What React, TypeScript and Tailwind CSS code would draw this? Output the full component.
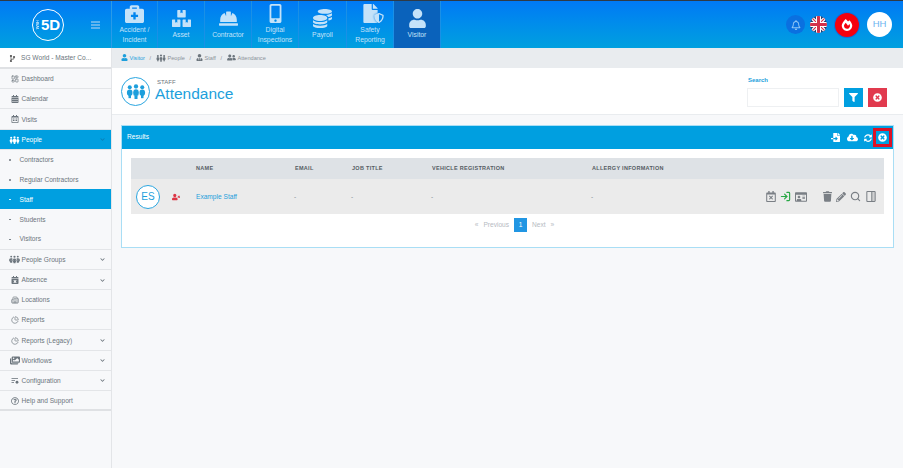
import {
  FaRegBell, FaBriefcaseMedical, FaBoxes, FaCalendarAlt, FaRegCalendarTimes, FaCalendarTimes, FaChevronDown, FaCloudDownloadAlt,
  FaCoins, FaFile, FaFileImport, FaFilter, FaFireAlt, FaHardHat, FaRegIdCard, FaImages, FaMobileAlt, FaPencilAlt,
  FaRegCalendarAlt, FaShieldAlt, FaSyncAlt, FaTimesCircle, FaTrash, FaUser, FaUserFriends, FaUserTimes,
  FaUserTie, FaRegQuestionCircle, FaCodeBranch,
} from 'react-icons/fa';
import { FaPeopleGroup } from 'react-icons/fa6';
import { Building2, LayoutDashboard, LogIn, PieChart, Search } from 'lucide-react';

// three standing people, used for the People section
function PeopleIcon({ className }: { className?: string }) {
  return (
    <svg viewBox="0 0 24 18" fill="currentColor" className={className}>
      <circle cx="4.5" cy="4" r="2.4" />
      <circle cx="12" cy="3" r="2.6" />
      <circle cx="19.5" cy="4" r="2.4" />
      <ellipse cx="4.5" cy="10.5" rx="3.4" ry="3.8" />
      <ellipse cx="19.5" cy="10.5" rx="3.4" ry="3.8" />
      <ellipse cx="12" cy="10.5" rx="3.8" ry="4.6" stroke="#fff" strokeWidth="0.6" />
      <rect x="3" y="13" width="3" height="4" />
      <rect x="18" y="13" width="3" height="4" />
      <rect x="10.2" y="14" width="3.6" height="4" />
    </svg>
  );
}

function ConfigIcon({ className }: { className?: string }) {
  return (
    <svg viewBox="0 0 16 14" className={className}>
      <path d="M1 2h13M1 6h7M1 10h5" stroke="currentColor" strokeWidth="1.6" fill="none" />
      <circle cx="12" cy="9.5" r="2.8" fill="currentColor" />
    </svg>
  );
}

function ColumnsIcon({ className }: { className?: string }) {
  return (
    <svg viewBox="0 0 12 14" className={className} fill="none" stroke="currentColor" strokeWidth="1.3">
      <rect x="0.7" y="0.7" width="10.6" height="12.6" rx="0.8" />
      <path d="M7 1v12" />
      <rect x="7" y="1" width="4" height="12" fill="currentColor" fillOpacity="0.25" stroke="none" />
    </svg>
  );
}

function SafetyIcon({ className }: { className?: string }) {
  return (
    <span className={`relative block ${className}`}>
      <FaFile className="text-[19px]" />
      <FaShieldAlt className="absolute -right-[4px] bottom-0 text-[10px] text-[#c4e2f9] [filter:drop-shadow(0_0_1px_#0a84e8)]" />
    </span>
  );
}

const modules = [
  { icon: FaBriefcaseMedical, label: ['Accident /', 'Incident'], w: 'w-[46px]' },
  { icon: FaBoxes, label: ['Asset'], w: 'w-[47px]' },
  { icon: FaHardHat, label: ['Contractor'], w: 'w-[47px]' },
  { icon: FaMobileAlt, label: ['Digital', 'Inspections'], w: 'w-[47px]' },
  { icon: FaCoins, label: ['Payroll'], w: 'w-[48px]' },
  { icon: SafetyIcon, label: ['Safety', 'Reporting'], w: 'w-[47px]' },
  { icon: FaUser, label: ['Visitor'], w: 'w-[47px]', active: true },
];

function SideRow({ icon: Icon, iconClass, label, caret, active, last }: { icon: any; iconClass?: string; label: string; caret?: boolean; active?: boolean; last?: boolean }) {
  return (
    <div className={`flex h-[20.2px] items-center border-b pl-[8px] pr-[6px] pt-px text-[6.6px] ${last ? 'border-[#dfe1e4] border-b-2' : 'border-[#e3e5e8]'} ${active ? 'bg-[#009fe0] text-white' : 'text-[#6c757d]'}`}>
      <span className="flex w-[13px] shrink-0 items-center justify-center">
        <Icon className={iconClass ?? 'h-[8px] w-[8px]'} />
      </span>
      <span className="ml-[0.5px] flex-1">{label}</span>
      {caret && <FaChevronDown className={`text-[5px] ${active ? 'text-[#0a7fb5]' : 'text-[#6c757d]'}`} />}
    </div>
  );
}

function SubRow({ label, active }: { label: string; active?: boolean }) {
  return (
    <div className={`flex h-[19.8px] items-center pl-[9px] pt-px text-[6.6px] ${active ? 'bg-[#009fe0] text-white' : 'text-[#6c757d]'}`}>
      <span className={`mr-[9px] h-[1.5px] w-[1.5px] rounded-full ${active ? 'bg-white' : 'bg-[#6c757d]'}`} />
      <span>{label}</span>
    </div>
  );
}

function Crumb({ icon: Icon, iconClass, label, active, sep }: { icon: any; iconClass: string; label: string; active?: boolean; sep?: boolean }) {
  return (
    <span className={`flex items-center gap-[1.5px] ${active ? 'text-[#1d9fdc]' : 'text-[#8a9299]'}`}>
      <Icon className={`${iconClass} ${active ? 'text-[#1d9fdc]' : 'text-[#6c757d]'}`} />
      <span>{label}</span>
      {sep && <span className="ml-[3px] mr-[5px] text-[#8a9299]">/</span>}
    </span>
  );
}

export default function App() {
  return (
    <div className="flex h-[468px] w-[903px] flex-col overflow-hidden bg-[#f7f8fa] font-['Liberation_Sans',Arial,sans-serif]">
      {/* Top bar */}
      <div className="h-px bg-[#2f3a45]" />
      <header className="flex h-[47px] items-stretch bg-gradient-to-b from-[#0079f5] to-[#00a0df]">
        <div className="flex w-[112px] items-center border-r border-[#2a9be8]">
          <div className="ml-[32px] flex h-[32px] w-[32px] items-center justify-center rounded-full border-[1.5px] border-white text-white">
            <span className="mr-px rotate-180 text-[4px] leading-none [writing-mode:vertical-lr]">WSH</span>
            <span className="text-[15px] font-bold leading-none">5D</span>
          </div>
          <div className="ml-[27px] flex w-[9px] flex-col gap-px">
            <span className="h-[2px] bg-[#5fb4ee]" />
            <span className="h-[2px] bg-[#5fb4ee]" />
            <span className="h-[2px] bg-[#5fb4ee]" />
          </div>
        </div>
        {modules.map((m) => (
          <div key={m.label[0]} className={`flex flex-col items-center justify-center border-r border-[#1a90e6] ${m.w} ${m.active ? 'bg-[#0a62bb]' : ''}`}>
            <m.icon className="text-[19px] text-[#c4e2f9]" />
            <div className="mt-[2px] text-center text-[6.8px] leading-[10px] text-[#c4e2f9]">
              {m.label.map((l) => <div key={l}>{l}</div>)}
            </div>
          </div>
        ))}
        <div className="ml-auto flex items-center pr-[11px]">
          <div className="flex h-[19px] w-[19px] items-center justify-center rounded-full bg-[#0a70e0]"><FaRegBell className="text-[10px] text-[#8fc6f5]" /></div>
          <svg width="17" height="17" viewBox="0 0 17 17" className="ml-[5px]">
            <defs><clipPath id="flag"><circle cx="8.5" cy="8.5" r="8.5" /></clipPath></defs>
            <g clipPath="url(#flag)">
              <rect width="17" height="17" fill="#2b3a6b" />
              <path d="M0 0 17 17M17 0 0 17" stroke="#fff" strokeWidth="3.4" />
              <path d="M0 0 17 17M17 0 0 17" stroke="#d3304a" strokeWidth="1.2" />
              <path d="M8.5 0V17M0 8.5H17" stroke="#fff" strokeWidth="5" />
              <path d="M8.5 0V17M0 8.5H17" stroke="#d3304a" strokeWidth="3" />
            </g>
          </svg>
          <div className="ml-[8px] flex h-[24px] w-[24px] items-center justify-center rounded-full bg-[#f4000d] shadow-[0_0_0_1px_#0a70e0]"><FaFireAlt className="text-[12px] text-white" /></div>
          <div className="ml-[8px] flex h-[25px] w-[25px] items-center justify-center rounded-full bg-white text-[9.5px] text-[#6cb4f0]">HH</div>
        </div>
      </header>

      <div className="flex flex-1">
        {/* Sidebar */}
        <aside className="w-[112px] shrink-0 border-r border-[#e3e5e8]">
          <div className="flex h-[21px] items-center border-b-2 border-[#dfe1e4] bg-white pl-[9px] pt-px text-[6.6px] text-[#6c757d]">
            <FaCodeBranch className="mr-[5px] text-[7px] text-[#555]" />
            <span>SG World - Master Co...</span>
          </div>
          <SideRow icon={LayoutDashboard} label="Dashboard" />
          <SideRow icon={FaCalendarAlt} label="Calendar" />
          <SideRow icon={FaRegCalendarAlt} label="Visits" />
          <SideRow icon={PeopleIcon} iconClass="h-[8px] w-[11px]" label="People" caret active />
          <SubRow label="Contractors" />
          <SubRow label="Regular Contractors" />
          <SubRow label="Staff" active />
          <SubRow label="Students" />
          <SubRow label="Visitors" />
          <div className="border-t border-[#e3e5e8]" />
          <SideRow icon={FaPeopleGroup} iconClass="h-[9px] w-[11px]" label="People Groups" caret />
          <SideRow icon={FaCalendarTimes} label="Absence" caret />
          <SideRow icon={Building2} label="Locations" />
          <SideRow icon={PieChart} label="Reports" />
          <SideRow icon={PieChart} label="Reports (Legacy)" caret />
          <SideRow icon={FaImages} iconClass="h-[9px] w-[10px]" label="Workflows" caret />
          <SideRow icon={ConfigIcon} label="Configuration" caret />
          <SideRow icon={FaRegQuestionCircle} label="Help and Support" last />
        </aside>

        <main className="flex min-w-0 flex-1 flex-col">
          {/* Breadcrumb */}
          <div className="flex h-[20px] items-center bg-[#e9ecef] pl-[9px] text-[5.6px]">
            <Crumb icon={FaUser} iconClass="h-[7px] w-[7px]" label="Visitor" active sep />
            <Crumb icon={PeopleIcon} iconClass="h-[8px] w-[10px]" label="People" sep />
            <Crumb icon={FaUserTie} iconClass="h-[7px] w-[7px]" label="Staff" sep />
            <Crumb icon={FaUserFriends} iconClass="h-[7px] w-[9px]" label="Attendance" />
          </div>

          {/* Page title */}
          <div className="flex h-[47px] items-center justify-between border-b border-[#e9ecef] bg-white pl-[9px] pr-[16px]">
            <div className="flex items-center">
              <div className="flex h-[29px] w-[29px] items-center justify-center rounded-full border border-[#2ba6e0] text-[#1d9fdc]">
                <PeopleIcon className="h-[15px] w-[20px]" />
              </div>
              <div className="ml-[5px]">
                <div className="ml-[2px] text-[6px] leading-[6px] text-[#6c757d]">STAFF</div>
                <div className="text-[15.5px] leading-[18px] text-[#1d9fdc]">Attendance</div>
              </div>
            </div>
            <div className="mt-[2px]">
              <div className="mb-[4px] ml-px text-[6px] font-bold leading-[7px] text-[#1d9fdc]">Search</div>
              <div className="flex items-center">
                <div className="h-[19px] w-[92px] border border-[#eef0f2] bg-white" />
                <div className="ml-[5px] flex h-[19px] w-[19px] items-center justify-center bg-[#009fe0]"><FaFilter className="text-[9px] text-white" /></div>
                <div className="ml-[5px] flex h-[19px] w-[19px] items-center justify-center bg-[#e13a4e]"><FaTimesCircle className="text-[9px] text-white" /></div>
              </div>
            </div>
          </div>

          {/* Results panel */}
          <section className="mx-[9px] mt-[10px] h-[123px] border border-[#a9def5] bg-white">
            <div className="flex h-[23px] items-center justify-between bg-[#009fe0] pl-[5px] text-[6.6px] text-white">
              <span className="-mt-px">Results</span>
              <div className="flex items-center pr-px">
                <FaFileImport className="mr-[7px] text-[9px]" />
                <FaCloudDownloadAlt className="mr-[6px] text-[11px]" />
                <FaSyncAlt className="text-[8px]" />
                <span className="ml-[1px] flex h-[19px] w-[19px] items-center justify-center border-[3px] border-[#dc1226]">
                  <FaTimesCircle className="text-[9px]" />
                </span>
              </div>
            </div>
            <div className="mx-[9px] mt-[9px]">
              <div className="flex h-[21px] items-center bg-[#dee2e6] text-[5.5px] font-bold tracking-[0.3px] text-[#555c63]">
                <span className="ml-[65px] w-[99px]">NAME</span>
                <span className="w-[57px]">EMAIL</span>
                <span className="w-[80px]">JOB TITLE</span>
                <span className="w-[160px]">VEHICLE REGISTRATION</span>
                <span>ALLERGY INFORMATION</span>
              </div>
              <div className="flex h-[35px] items-center bg-[#ebebeb] text-[6.6px] text-[#8a9299]">
                <div className="ml-[5px] flex h-[24px] w-[24px] items-center justify-center rounded-full border border-[#2ba6e0] bg-white text-[10px] text-[#1d9fdc]">ES</div>
                <FaUserTimes className="ml-[12px] text-[8px] text-[#dc3545]" />
                <span className="ml-[16px] w-[98px] text-[#1d9fdc]">Example Staff</span>
                <span className="w-[57px]">-</span>
                <span className="w-[80px]">-</span>
                <span className="w-[160px]">-</span>
                <span>-</span>
                <div className="ml-auto mr-[8px] flex items-center text-[#7a7f85]">
                  <FaRegCalendarTimes className="h-[11px] w-[10px]" />
                  <LogIn className="ml-[4px] h-[11px] w-[11px] text-[#28a745]" strokeWidth={2.5} />
                  <FaRegIdCard className="ml-[4px] h-[12px] w-[12px]" />
                  <FaTrash className="ml-[16px] h-[11px] w-[9px]" />
                  <FaPencilAlt className="ml-[4px] h-[10px] w-[10px]" />
                  <Search className="ml-[4px] h-[11px] w-[11px]" strokeWidth={2.5} />
                  <ColumnsIcon className="ml-[5px] h-[11px] w-[10px]" />
                </div>
              </div>
            </div>
            <div className="mt-[4px] flex items-center justify-center pl-[14px] text-[6.6px] text-[#b5babf]">
              <span className="mr-[5px]">«</span>
              <span>Previous</span>
              <span className="ml-[5px] flex h-[14px] w-[13px] items-center justify-center bg-[#2196e3] text-white">1</span>
              <span className="ml-[5px]">Next</span>
              <span className="ml-[5px]">»</span>
            </div>
          </section>
        </main>
      </div>
    </div>
  );
}
